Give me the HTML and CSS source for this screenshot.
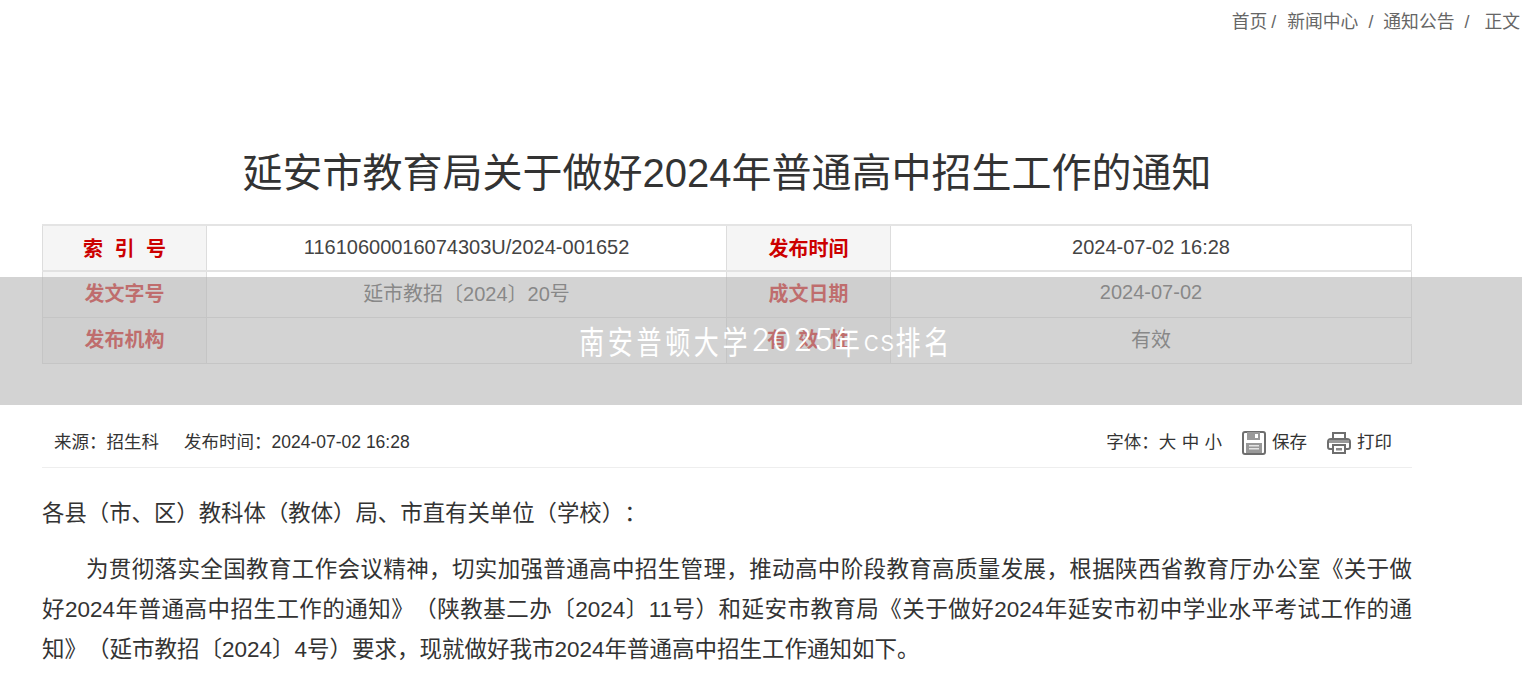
FILE: index.html
```html
<!DOCTYPE html>
<html lang="zh-CN">

<head>
    <meta charset="UTF-8">
    <title>延安市教育局关于做好2024年普通高中招生工作的通知</title>
    <link rel="stylesheet" href="styles.css">
</head>

<body>

    <div class="crumbs">
        <span>首页</span><i class="sep1">/</i>
        <span>新闻中心</span><i class="sep2">/</i>
        <span>通知公告</span><i class="sep3">/</i>
        <span>正文</span>
    </div>

    <div class="main">
        <h1 class="title">延安市教育局关于做好2024年普通高中招生工作的通知</h1>

        <table class="info">
            <tr>
                <th class="spaced">索 引 号</th>
                <td class="wide">11610600016074303U/2024-001652</td>
                <th>发布时间</th>
                <td>2024-07-02 16:28</td>
            </tr>
            <tr>
                <th>发文字号</th>
                <td>延市教招〔2024〕20号</td>
                <th>成文日期</th>
                <td>2024-07-02</td>
            </tr>
            <tr>
                <th>发布机构</th>
                <td></td>
                <th class="spaced">有 效 性</th>
                <td>有效</td>
            </tr>
        </table>

        <div class="meta">
            <div class="meta-left">
                <span>来源：招生科</span>
                <span>发布时间：<em>2024-07-02 16:28</em></span>
            </div>
            <div class="meta-right">
                <span class="font-size">字体：大 中 小</span>
                <span class="tool">
                    <svg width="24" height="24" viewBox="0 0 24 24">
                        <path d="M1 3a2 2 0 0 1 2-2h18a2 2 0 0 1 2 2v18a2 2 0 0 1-2 2H3a2 2 0 0 1-2-2z" fill="none" stroke="#6e6e6e" stroke-width="2"/>
                        <path d="M5 1h13v8H5z" fill="#999"/>
                        <path d="M13 3h3v4h-3z" fill="#fff"/>
                        <path d="M4 12h16v10H4z" fill="#999"/>
                        <path d="M7 14h10v1.500H7zM7 17h10v1.500H7z" fill="#e4e4e4"/>
                    </svg>
                    保存
                </span>
                <span class="tool">
                    <svg width="24" height="24" viewBox="0 0 24 24">
                        <path d="M6 8V2h12v6" fill="none" stroke="#6e6e6e" stroke-width="2"/>
                        <path d="M6 18H3a2 2 0 0 1-2-2v-5a3 3 0 0 1 3-3h16a3 3 0 0 1 3 3v5a2 2 0 0 1-2 2h-3" fill="none" stroke="#6e6e6e" stroke-width="2"/>
                        <path d="M2 9h20v3H2z" fill="#999"/>
                        <path d="M6 14h12v8H6z" fill="#fff" stroke="#6e6e6e" stroke-width="2"/>
                        <path d="M9 17h6v2.500H9z" fill="#888"/>
                    </svg>
                    打印
                </span>
            </div>
        </div>

        <div class="article">
            <p class="lead">各县（市、区）教科体（教体）局、市直有关单位（学校）：</p>
            <p class="para">为贯彻落实全国教育工作会议精神，切实加强普通高中招生管理，推动高中阶段教育高质量发展，根据陕西省教育厅办公室《关于做好2024年普通高中招生工作的通知》（陕教基二办〔2024〕11号）和延安市教育局《关于做好2024年延安市初中学业水平考试工作的通知》（延市教招〔2024〕4号）要求，现就做好我市2024年普通高中招生工作通知如下。</p>
        </div>
    </div>

    <div class="overlay">
        <div class="overlay-text">
            <span class="han">南安普顿大学</span>
            <span class="num">2025</span>
            <span class="han">年</span>
            <span class="lat">cs</span>
            <span class="han">排名</span>
        </div>
    </div>

</body>

</html>
```

FILE: styles.css
```css
html,
body {
    margin: 0;
    padding: 0;
    background: #fff;
    overflow: hidden;
    height: 682px;
}

body {
    font-family: "Liberation Sans", "Noto Sans CJK SC", sans-serif;
    color: #333;
    position: relative;
    text-spacing-trim: space-all;
}

.crumbs {
    display: flex;
    justify-content: flex-end;
    height: 42px;
    line-height: 44px;
    padding-right: 2px;
    font-size: 17.8px;
    color: #666;
}

.crumbs i {
    font-style: normal;
}

.crumbs .sep1 {
    margin: 0 11px 0 4px;
}

.crumbs .sep2 {
    margin: 0 10px;
}

.crumbs .sep3 {
    margin: 0 15px 0 10px;
}

.main {
    width: 1370px;
    margin-left: 42px;
}

.title {
    margin: 0;
    padding-top: 102px;
    height: 80px;
    line-height: 58px;
    text-align: center;
    font-size: 40px;
    font-weight: normal;
    color: #333;
}

.info {
    width: 100%;
    border-collapse: collapse;
    table-layout: fixed;
    font-size: 20px;
}

.info th,
.info td {
    border: 1px solid #ddd;
    height: 46px;
    padding: 0 0 4px;
    text-align: center;
    box-sizing: border-box;
    color: #444;
}

.info tr:first-child th,
.info tr:first-child td {
    padding-bottom: 2px;
    border-top: 2px solid #e4e4e4;
    border-bottom: 2px solid #e2e2e2;
}

.info th,
.info tr:first-child th {
    width: 164px;
    background: #f5f5f5;
    color: #c00;
    font-weight: bold;
}

.info .wide {
    width: 520px;
}

.info .spaced {
    word-spacing: 6px;
}

.meta {
    display: flex;
    justify-content: space-between;
    align-items: center;
    height: 60px;
    margin-top: 44px;
    padding: 7px 20px 0 12px;
    box-sizing: border-box;
    border-bottom: 1px solid #eee;
    font-size: 17.5px;
}

.meta-left {
    display: flex;
    gap: 25px;
}

.meta em {
    font-style: normal;
}

.meta-right {
    display: flex;
    align-items: center;
    gap: 20px;
}

.font-size {
    word-spacing: 0.5px;
}

.tool {
    display: flex;
    align-items: center;
    gap: 6px;
}

.tool svg {
    margin-top: 4px;
}

.article {
    font-size: 22.4px;
    line-height: 40px;
}

.article p {
    margin: 0;
}

.lead {
    padding-top: 26px;
    padding-bottom: 16px;
}

.para {
    font-size: 22.5px;
    text-indent: 44px;
    text-align: justify;
}

.overlay {
    position: absolute;
    left: 0;
    top: 277px;
    width: 100%;
    height: 128px;
    display: flex;
    align-items: center;
    justify-content: center;
    padding: 0 0 3px 10px;
    box-sizing: border-box;
    background: rgba(182, 182, 182, 0.6);
    color: #fff;
}

.overlay-text {
    display: flex;
    align-items: baseline;
    font-family: "Inter", "Noto Sans CJK SC", sans-serif;
}

.overlay .han {
    font-size: 25px;
    letter-spacing: 3.67px;
    transform: scaleY(1.25);
}

.overlay .num {
    font-size: 31px;
    font-weight: 300;
    letter-spacing: 2px;
}

.overlay .lat {
    font-size: 28px;
    font-weight: 300;
    letter-spacing: 1px;
}
```
